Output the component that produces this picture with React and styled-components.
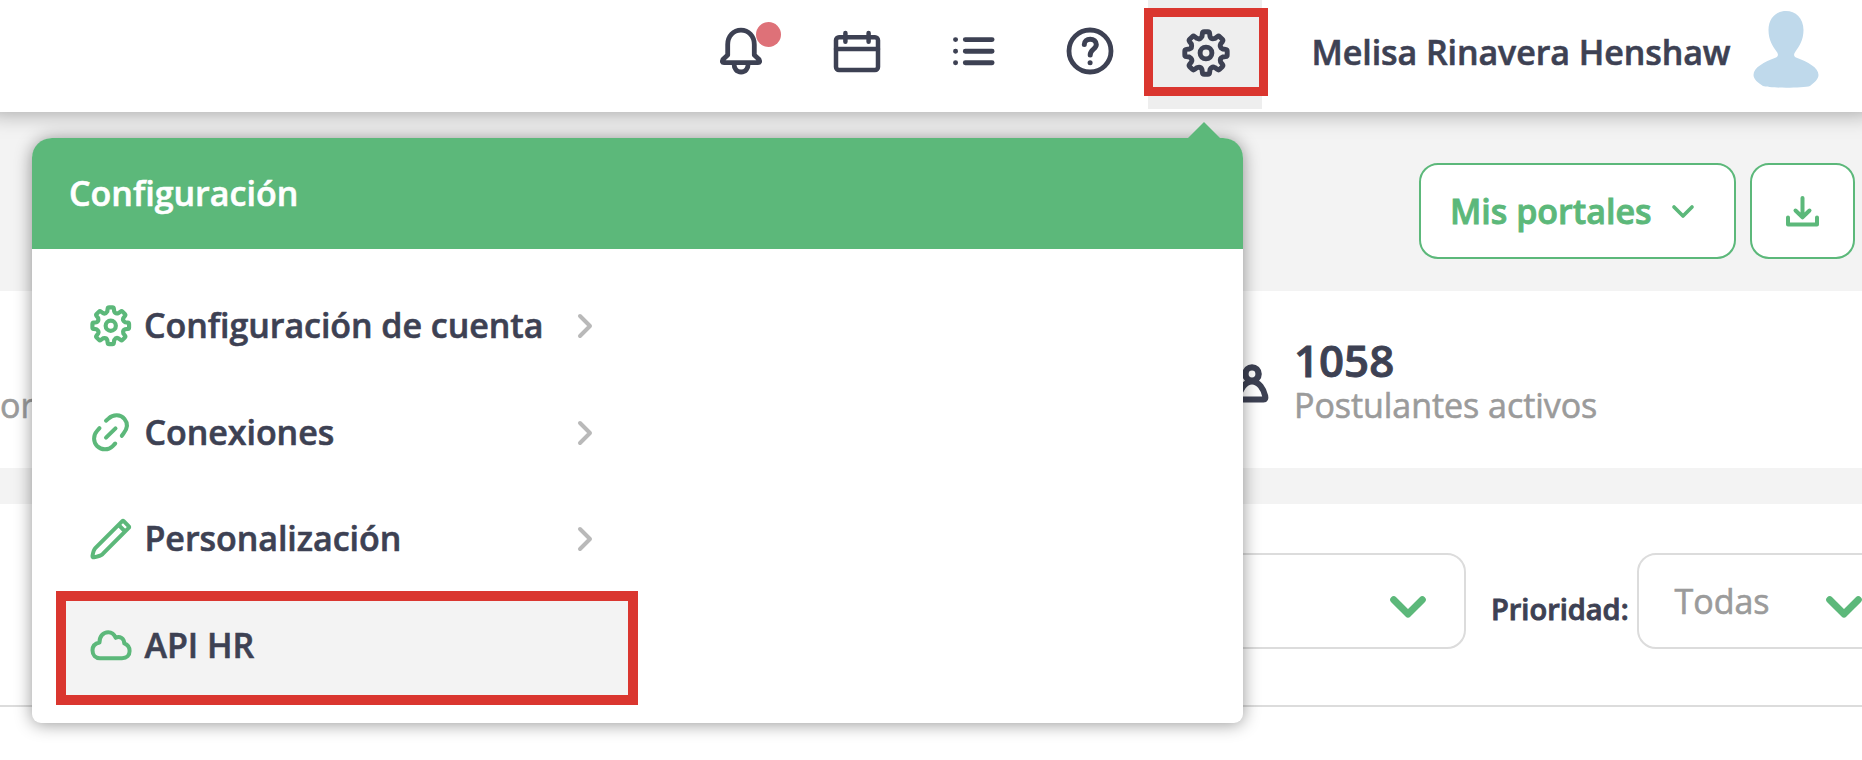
import React from "react";
import styled, { createGlobalStyle } from "styled-components";

const c = {
  ink: "#3d4153",
  green: "#5cb87a",
  grey: "#9b9b9b",
  line: "#dcdcdc",
  band: "#f3f3f3",
  red: "#da362f",
};

const GlobalStyle = createGlobalStyle`
  * { box-sizing: border-box; }
  body { margin: 0; background: #fff; font-family: "Open Sans", sans-serif; color: ${c.ink}; overflow: hidden; }
  svg { display: block; flex: none; fill: none; stroke: currentColor; stroke-linecap: round; stroke-linejoin: round; overflow: visible; }
`;

const Page = styled.div`
  position: relative;
  width: 1862px;
  height: 760px;
  overflow: hidden;
  display: flex;
  flex-direction: column;
  -webkit-text-stroke: 0.6px currentColor;
`;

const TopBar = styled.header`
  position: relative;
  z-index: 1;
  flex: none;
  display: flex;
  height: 112px;
  padding-left: 683px;
  background: #fff;
  box-shadow: 0 -12px 22px 12px rgba(0, 0, 0, 0.37);
`;

const NavItem = styled.div`
  position: relative;
  display: flex;
  justify-content: center;
  width: 116.25px;
  height: 109px;
  padding-top: 27px;
`;

const ActiveNavItem = styled(NavItem)`
  width: 114px;
  margin-right: 49.5px;
  padding: 28.5px 0 0 2px;
  background: #eee;
`;

const Badge = styled.span`
  position: absolute;
  left: 73px;
  top: 22px;
  width: 25px;
  height: 25px;
  border-radius: 50%;
  background: #de7178;
`;

const Highlight = styled.div`
  position: absolute;
  left: ${(p) => p.$x}px;
  top: ${(p) => p.$y}px;
  width: ${(p) => p.$w}px;
  height: ${(p) => p.$h}px;
  border: ${(p) => p.$b}px solid ${c.red};
`;

const UserName = styled.div`
  width: 441.5px;
  height: 104px;
  line-height: 104px;
  font-size: 34px;
  font-weight: 600;
  letter-spacing: -0.08px;
  white-space: nowrap;
`;

const Actions = styled.section`
  flex: none;
  display: flex;
  justify-content: flex-end;
  gap: 14px;
  height: 179px;
  padding: 51px 7px 0 0;
  background: ${c.band};
`;

const OutlineButton = styled.button`
  display: flex;
  align-items: center;
  justify-content: center;
  gap: 20px;
  width: ${(p) => p.$w}px;
  height: 96px;
  padding: 0 ${(p) => p.$pad || 0}px 0 0;
  border: 2.5px solid ${c.green};
  border-radius: 19px;
  background: #fff;
  color: ${c.green};
  font: 600 34px "Open Sans", sans-serif;
  -webkit-text-stroke: 0.9px currentColor;
`;

const Stats = styled.section`
  flex: none;
  display: flex;
  height: 177px;
  padding-top: 44px;
`;

const Stat = styled.div`
  display: flex;
  flex-direction: column;
  width: ${(p) => p.$w}px;
  white-space: nowrap;
`;

const StatValue = styled.strong`
  height: 52px;
  line-height: 51px;
  font-size: 43.8px;
  font-weight: 600;
  -webkit-text-stroke: 0.9px currentColor;
`;

const StatLabel = styled.span`
  line-height: 36px;
  font-size: 34px;
  letter-spacing: -0.05px;
  color: ${c.grey};
`;

const StatIcon = styled.div`
  margin: 28px 26px 0 0;
`;

const Gap = styled.div`
  flex: none;
  height: 36px;
  background: ${c.band};
`;

const Filters = styled.section`
  flex: none;
  display: flex;
  height: 203px;
  padding: 49px 0 0 1000px;
  border-bottom: 2px solid ${c.line};
`;

const Select = styled.div`
  flex: none;
  display: flex;
  align-items: center;
  justify-content: space-between;
  width: ${(p) => p.$w}px;
  height: 96px;
  padding: 0 38px 0 36px;
  border: 2px solid ${c.line};
  border-radius: 19px;
  font-size: 34px;
  color: ${c.grey};

  svg { color: ${c.green}; margin-top: 12px; }
`;

const FilterLabel = styled.div`
  flex: none;
  width: 170.5px;
  padding-left: 25px;
  line-height: 112px;
  font-size: 29px;
  font-weight: 600;
  white-space: nowrap;
  -webkit-text-stroke: 0.9px currentColor;
`;

const Panel = styled.div`
  position: absolute;
  z-index: 2;
  left: 32px;
  top: 138px;
  width: 1211px;
  height: 585px;
  border-radius: 21px 21px 9px 9px;
  background: #fff;
  box-shadow: 0 1px 17px rgba(0, 0, 0, 0.42);
`;

const Pointer = styled.i`
  position: absolute;
  left: 1155px;
  top: -16px;
  border: 17px solid transparent;
  border-top: 0;
  border-bottom-color: ${c.green};
`;

const PanelTitle = styled.h2`
  height: 111px;
  margin: 0;
  padding-left: 37px;
  border-radius: 20px 20px 0 0;
  background: ${c.green};
  color: #fff;
  line-height: 111px;
  font-size: 34px;
  font-weight: 600;
`;

const Menu = styled.nav`
  display: flex;
  flex-direction: column;
  width: 600px;
  padding: 23px 0 0 32px;
`;

const MenuItem = styled.div`
  display: flex;
  align-items: center;
  height: 106.6px;
  padding: 1.5px 6px 0 26px;
  background: ${(p) => (p.$active ? c.band : "#fff")};
`;

const MenuLabel = styled.span`
  flex: 1;
  padding: 0 0 2px 12.5px;
  font-size: 34px;
  line-height: 46px;
  font-weight: 600;
  letter-spacing: -0.05px;
  white-space: nowrap;
`;

const MenuIcon = styled.span`
  color: ${c.green};
`;

const ItemChevron = styled.span`
  width: 48px;
  color: #b9b9b9;
`;

const gearPath = (() => {
  const at = (x, y, a) => {
    const r = (a * Math.PI) / 180;
    return `${(24 + x * Math.cos(r) - y * Math.sin(r)).toFixed(2)} ${(24 + x * Math.sin(r) + y * Math.cos(r)).toFixed(2)}`;
  };
  let d = "";
  for (let a = 0; a < 360; a += 45) {
    d += `${a ? "L" : "M"}${at(-4, -16.6, a)}L${at(-3.6, -19.6, a)}Q${at(-3.4, -21.2, a)} ${at(-1.9, -21.2, a)}`;
    d += `L${at(1.9, -21.2, a)}Q${at(3.4, -21.2, a)} ${at(3.6, -19.6, a)}L${at(4, -16.6, a)}`;
    d += `Q${at(5, -13.6, a)} ${at(-4, -16.6, a + 45)}`;
  }
  return d + "Z";
})();

const Gear = ({ size, width }) => (
  <svg width={size} height={size} viewBox="0 0 48 48" strokeWidth={width}>
    <path d={gearPath} />
    <circle cx="24" cy="24" r="5.9" />
  </svg>
);

const Bell = () => (
  <svg width="48" height="48" viewBox="0 0 48 48" strokeWidth="4.8">
    <path d="M10.7 28V17.5C10.7 9 16.6 3.1 24 3.1S37.3 9 37.3 17.5V28L42.1 32.6Q43.6 35.6 41 35.6H7Q4.4 35.6 5.9 32.6L10.7 28Z" />
    <path d="M17 36.3C17 41.8 19.7 45 24.1 45S31.2 41.8 31.2 36.3" />
  </svg>
);

const Calendar = () => (
  <svg width="48" height="48" viewBox="0 0 48 48" strokeWidth="4.5">
    <rect x="3" y="10.2" width="42" height="32.8" rx="3" />
    <path d="M3 22H45M12.4 6V14.8M35.6 6V14.8" />
  </svg>
);

const List = () => (
  <svg width="48" height="48" viewBox="0 0 48 48" strokeWidth="4.9">
    <path d="M15.3 12.6H42.1M15.3 24.2H42.1M15.3 35.8H42.1M5.5 12.6H5.6M5.5 24.2H5.6M5.5 35.8H5.6" />
  </svg>
);

const Help = () => (
  <svg width="48" height="48" viewBox="0 0 48 48" strokeWidth="4.8">
    <circle cx="24" cy="24" r="21" />
    <path d="M18.3 17.5C18.3 14.3 20.8 12.2 24.2 12.2C27.7 12.2 30.3 14.5 30.3 17.6C30.3 22.4 24.2 22 24.2 28" strokeWidth="5" />
    <circle cx="24.1" cy="35.8" r="2.5" fill="currentColor" stroke="none" />
  </svg>
);

const AvatarIcon = styled.svg`
  margin-top: 10.5px;
  color: #bfd9eb;
`;

const Avatar = () => (
  <AvatarIcon width="66" height="77" viewBox="0 0 66 77">
    <path
      fill="currentColor"
      stroke="none"
      d="M33 0C42.5 0 50.5 7 50.5 19C50.5 29 46 35.5 42.5 40.5C40.5 43 40.5 45 43 46.5C55 51 65.5 56.5 65.5 64C65.5 68 61 72 57 75C50 77.3 16 77.3 10 75C5 72 .5 68 .5 64C.5 56.5 11 51 23 46.5C25.5 45 25.5 43 23.5 40.5C20 35.5 15.5 29 15.5 19C15.5 7 23.5 0 33 0Z"
    />
  </AvatarIcon>
);

const LinkIcon = () => (
  <svg width="42" height="42" viewBox="0 0 42 42" strokeWidth="4">
    <path d="M16 8.7L18.6 6.5C23.2 2.1 30.7 2.2 34.5 6.9C38.3 11.5 37.2 16.8 33.5 21.5L31.8 23.8" />
    <path d="M9.500 16.200L7 19C3 23.5 3.1 30 7.3 34.3C11.5 38.4 18.5 38.3 22.5 34.3L25.2 31.5" />
    <path d="M16 25.7L25.5 16.3" />
  </svg>
);

const Pencil = () => (
  <svg width="42" height="42" viewBox="0 0 42 42" strokeWidth="4">
    <path d="M5.3 30.2L32.3 3.2Q33 2.5 33.7 3.2L38.6 8.1Q39.5 9 38.7 9.9L12.5 36.2Q10.5 38 4 39.3Q2.3 39.5 2.500 37.8Q3.5 32 5.3 30.2ZM28.8 7.2L34.6 13" />
  </svg>
);

const Cloud = () => (
  <svg width="42" height="42" viewBox="0 0 42 42" strokeWidth="4">
    <path d="M10 33.2H32C37 33.2 39.600 30.2 39.6 26C39.6 21.9 37.3 19.5 34.3 18.4C34.2 13.6 29.7 10.5 25.7 12.8C24.2 9.2 21.7 7.2 18.3 7.2C13 7.2 9.4 11.5 9.5 17.5C5 18.4 2.5 21.3 2.5 25.3C2.5 30.1 5.5 33.2 10 33.2Z" />
  </svg>
);

const ChevronRight = () => (
  <svg width="14" height="24" viewBox="0 0 14 24" strokeWidth="4">
    <path d="M2 2L12 12L2 22" />
  </svg>
);

const ChevronDown = () => (
  <svg width="22" height="13" viewBox="0 0 22 13" strokeWidth="3.7">
    <path d="M2 2L11 11L20 2" />
  </svg>
);

const SelectChevron = () => (
  <svg width="36" height="22" viewBox="0 0 36 22" strokeWidth="7">
    <path d="M3.7 3.7L18 18L32.3 3.7" />
  </svg>
);

const Download = () => (
  <svg width="33" height="31" viewBox="0 0 33 31" strokeWidth="4">
    <path d="M2 21.5V28.5H31V21.5M16.5 2V21M9.5 14.5L16.5 21.3L23.5 14.5" />
  </svg>
);

const Person = () => (
  <svg width="38" height="40" viewBox="0 0 38 40" strokeWidth="6.4">
    <circle cx="22" cy="11" r="6.6" />
    <path d="M22 18.5C15 18.5 9.5 27 8.7 34.5Q8.7 36.5 10.5 36.5H33.5Q36 36.5 35.2 33C33.7 26 29 18.5 22 18.5Z" strokeWidth="6" />
  </svg>
);

const items = [
  { label: "Configuración de cuenta", icon: <Gear size={41.5} width={4.8} />, more: true },
  { label: "Conexiones", icon: <LinkIcon />, more: true },
  { label: "Personalización", icon: <Pencil />, more: true },
  { label: "API HR", icon: <Cloud />, active: true },
];

export default function App() {
  return (
    <Page>
      <GlobalStyle />
      <TopBar>
        <NavItem><Bell /><Badge /></NavItem>
        <NavItem><Calendar /></NavItem>
        <NavItem><List /></NavItem>
        <NavItem><Help /></NavItem>
        <ActiveNavItem>
          <Gear size={48} width={4.9} />
          <Highlight $x={-4} $y={8} $w={123.5} $h={88} $b={9} />
        </ActiveNavItem>
        <UserName>Melisa Rinavera Henshaw</UserName>
        <Avatar />
      </TopBar>

      <Actions>
        <OutlineButton $w={317.5} $pad={11}>Mis portales <ChevronDown /></OutlineButton>
        <OutlineButton $w={105} aria-label="Descargar"><Download /></OutlineButton>
      </Actions>

      <Stats>
        <Stat $w={1230}>
          <StatValue />
          <StatLabel>or</StatLabel>
        </Stat>
        <StatIcon><Person /></StatIcon>
        <Stat $w={400}>
          <StatValue>1058</StatValue>
          <StatLabel>Postulantes activos</StatLabel>
        </Stat>
      </Stats>
      <Gap />
      <Filters>
        <Select $w={466}><span /><SelectChevron /></Select>
        <FilterLabel>Prioridad:</FilterLabel>
        <Select $w={265}><span>Todas</span><SelectChevron /></Select>
      </Filters>

      <Panel>
        <Pointer />
        <PanelTitle>Configuración</PanelTitle>
        <Menu>
          {items.map((it) => (
            <MenuItem key={it.label} $active={it.active}>
              <MenuIcon>{it.icon}</MenuIcon>
              <MenuLabel>{it.label}</MenuLabel>
              {it.more && <ItemChevron><ChevronRight /></ItemChevron>}
            </MenuItem>
          ))}
        </Menu>
        <Highlight $x={24} $y={453} $w={582} $h={114} $b={10} />
      </Panel>
    </Page>
  );
}
